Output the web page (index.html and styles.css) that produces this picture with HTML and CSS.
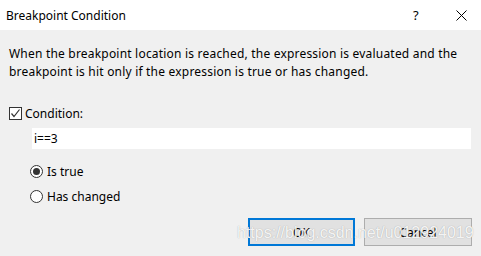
FILE: index.html
```html
<!DOCTYPE html>
<html lang="en">
<head>
    <meta charset="UTF-8">
    <title>Breakpoint Condition</title>
    <link rel="stylesheet" href="styles.css">
</head>
<body>
    <div class="dialog">
        <div class="titlebar">
            <span class="title">Breakpoint Condition</span>
            <span class="help">?</span>
            <span class="close">
                <svg width="11" height="11" viewBox="0 0 11 11"><path d="M0.5 0.5 L10.5 10.5 M10.5 0.5 L0.5 10.5" stroke="#000" stroke-width="1" fill="none"/></svg>
            </span>
        </div>
        <div class="content">
            <p class="desc">When the breakpoint location is reached, the expression is evaluated and the breakpoint is hit only if the expression is true or has changed.</p>

            <label class="check-row">
                <span class="checkbox">
                    <svg width="11" height="11" viewBox="0 0 11 11"><path d="M1.5 5.5 L4 8.5 L9.5 1.5" stroke="#333" stroke-width="1.2" fill="none"/></svg>
                </span>
                Condition:
            </label>

            <div class="cond-input">i==3</div>

            <div class="radios">
                <label class="radio-row"><span class="radio checked"></span>Is true</label>
                <label class="radio-row"><span class="radio"></span>Has changed</label>
            </div>

            <div class="buttons">
                <button class="btn btn-default">OK</button>
                <button class="btn">Cancel</button>
            </div>
        </div>
        <div class="watermark">https://blog.csdn.net/u012924019</div>
    </div>
</body>
</html>
```
FILE: styles.css
```css
body {
    margin: 0;
    padding: 0;
    font-family: "Noto Sans", "Open Sans", sans-serif;
    font-size: 12px;
    color: #000;
}
.dialog {
    position: relative;
    width: 481px;
    height: 256px;
    background-color: #f0f0f0;
    overflow: hidden;
}
.titlebar {
    display: flex;
    align-items: center;
    height: 30px;
    background-color: #fff;
    padding-left: 6px;
}
.title {
    flex: 1;
}
.help {
    width: 10px;
    margin-right: 33px;
    font-size: 13px;
}
.close {
    display: flex;
    margin-right: 14px;
}
.content {
    padding: 0 9px;
}
.desc {
    margin: 15px 0 0;
    line-height: 18px;
    letter-spacing: 0.2px;
}
.check-row {
    display: flex;
    align-items: center;
    height: 13px;
    margin-top: 26px;
}
.checkbox {
    box-sizing: border-box;
    display: flex;
    align-items: center;
    justify-content: center;
    width: 13px;
    height: 13px;
    border: 1px solid #333;
    background-color: #fff;
    margin-right: 3px;
}
.cond-input {
    box-sizing: border-box;
    width: 439px;
    height: 21px;
    line-height: 21px;
    margin: 8px 0 0 23px;
    padding-left: 2px;
    background-color: #fff;
}
.radios {
    display: flex;
    flex-direction: column;
    gap: 7px;
    margin: 13px 0 0 21px;
}
.radio-row {
    display: flex;
    align-items: center;
    height: 18px;
}
.radio {
    box-sizing: border-box;
    display: flex;
    align-items: center;
    justify-content: center;
    width: 13px;
    height: 13px;
    border: 1px solid #333;
    border-radius: 50%;
    background-color: #fff;
    margin-right: 4px;
}
.radio.checked::after {
    content: "";
    width: 7px;
    height: 7px;
    border-radius: 50%;
    background-color: #333;
}
.buttons {
    display: flex;
    justify-content: flex-end;
    gap: 9px;
    margin-top: 13px;
}
.btn {
    box-sizing: border-box;
    width: 108px;
    height: 28px;
    font-family: inherit;
    font-size: 12px;
    background-color: #e1e1e1;
    border: 1px solid #adadad;
    padding: 0;
    color: #000;
}
.btn-default {
    width: 107px;
    border: 2px solid #0078d7;
}
.watermark {
    position: absolute;
    left: 237px;
    top: 224px;
    font-family: "Liberation Sans", Arial, sans-serif;
    font-size: 16px;
    color: rgba(255, 255, 255, 0.9);
    text-shadow: 0 0 1px rgba(110, 110, 110, 0.6);
}
```
